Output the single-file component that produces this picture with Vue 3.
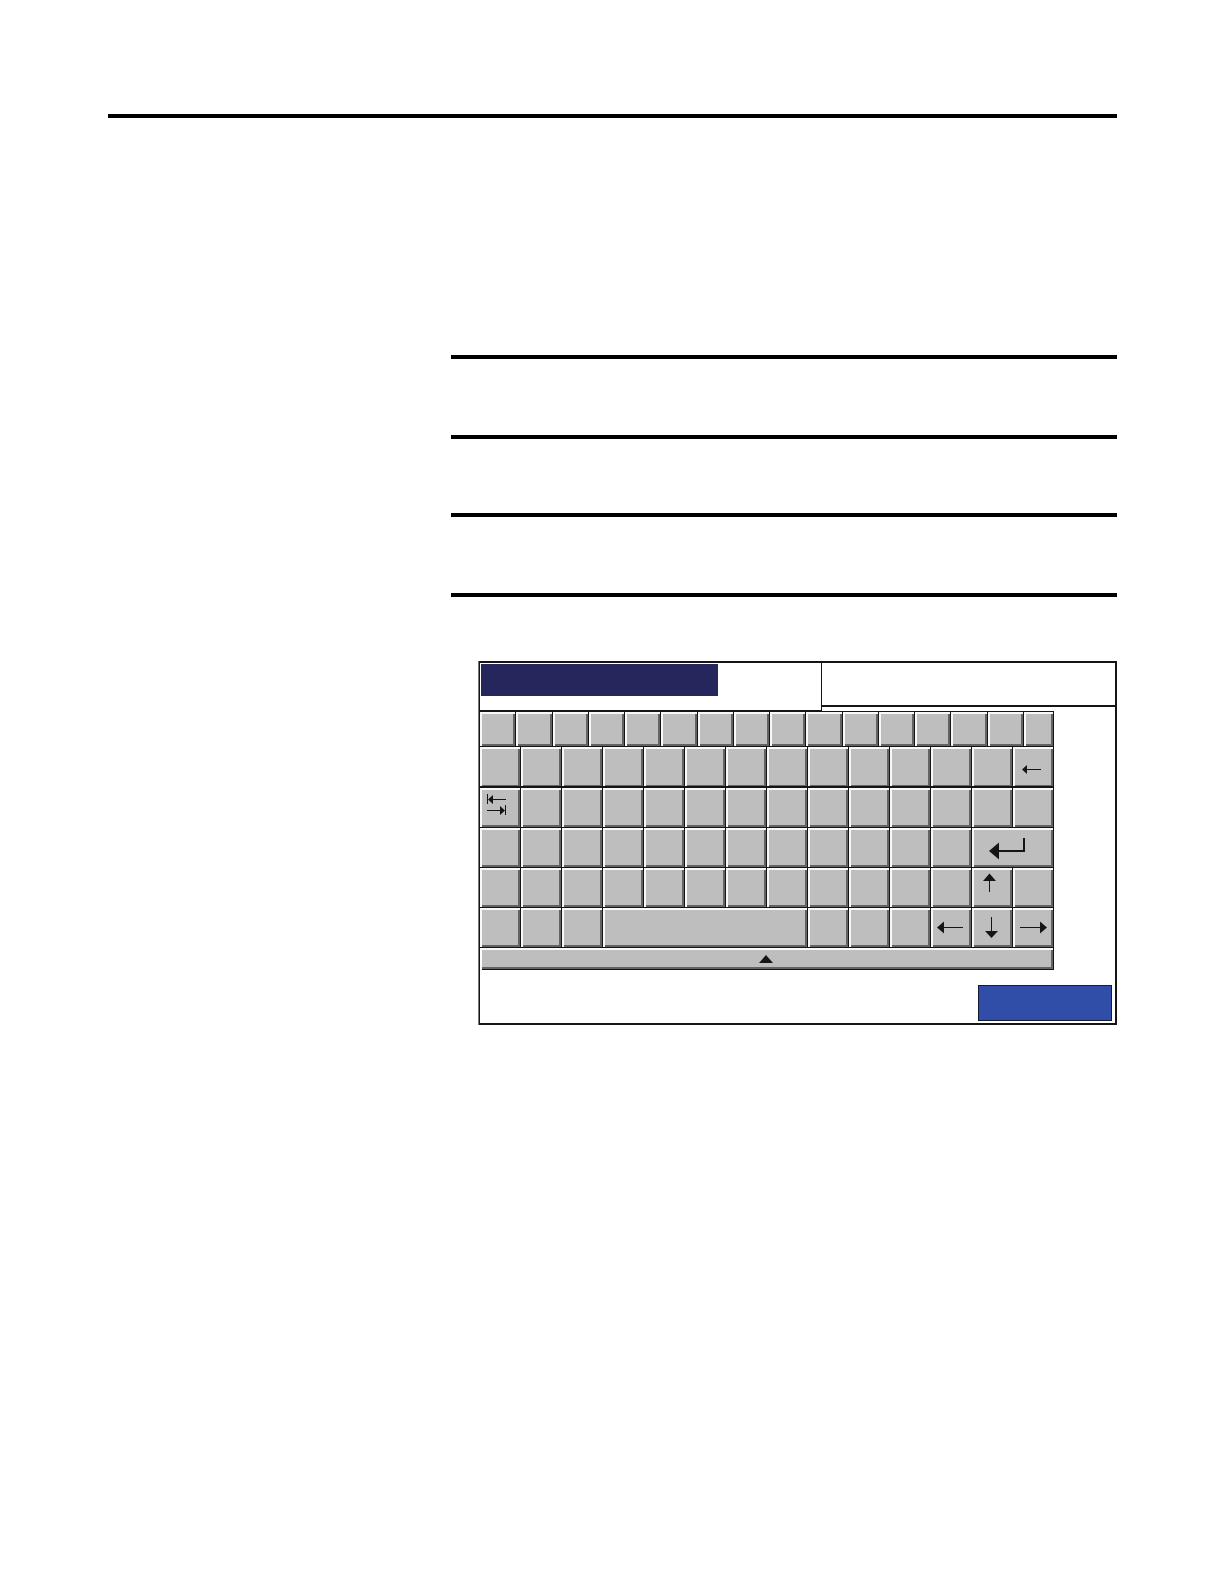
<template>
    <main class="page">
        <hr class="page__rule" />
        <section class="page__notes">
            <div class="note" v-for="(size, index) in notes" :key="index" :class="`note--${size}`"></div>
        </section>
        <section class="panel">
            <header class="panel__header">
                <div class="panel__entry">
                    <div class="panel__selection"></div>
                </div>
                <div class="panel__status"></div>
            </header>
            <div class="keyboard">
                <div
                    class="keyboard__row"
                    v-for="(row, rowIndex) in rows"
                    :key="rowIndex"
                    :class="`keyboard__row--${row.type}`"
                >
                    <button
                        class="key"
                        type="button"
                        v-for="(key, index) in row.keys"
                        :key="index"
                        :class="key.size ? `key--${key.size}` : ''"
                        :aria-label="key.label"
                    >
                        <svg v-if="key.icon" class="key__icon" width="80" height="38" viewBox="0 0 80 38">
                            <path class="key__line" :class="{ 'key__line--bold': key.bold }" :d="key.icon.line" />
                            <path class="key__head" :d="key.icon.head" />
                        </svg>
                    </button>
                </div>
                <button class="key keyboard__bar" type="button" aria-label="Expand">
                    <svg width="18" height="8" viewBox="0 0 18 8">
                        <path class="key__head" d="M0 8L7 0L14 8Z" />
                    </svg>
                </button>
            </div>
            <footer class="panel__footer">
                <button class="panel__action" type="button" aria-label="Action"></button>
            </footer>
        </section>
    </main>
</template>

<script setup>
const notes = ["tall", "short", "tall"];

const icons = {
    backspace: { line: "M13 22.5H28", head: "M9 22.5L14 18V27Z" },
    tab: {
        line: "M7.5 6V16M12 11.5H26M7 22.5H21M25.5 17V27",
        head: "M8 11.5L13 7V16ZM25 22.5L20 18V27Z"
    },
    enter: { line: "M26 23H52V10", head: "M17 23L27 14.5V31.5Z" },
    up: { line: "M17.5 12V24", head: "M17.5 5.5L24 13H11Z" },
    left: { line: "M12 19.5H32", head: "M6 19.5L13 13.5V25.5Z" },
    down: { line: "M19.5 9V24", head: "M19.5 30L13 23H26Z" },
    right: { line: "M7 19.5H28", head: "M34 19.5L27 13.5V25.5Z" }
};

const blank = (count) => Array.from({ length: count }, () => ({}));

const rows = [
    { type: "function", keys: blank(16) },
    { type: "number", keys: [...blank(13), { icon: icons.backspace, label: "Backspace" }] },
    { type: "letter", keys: [{ icon: icons.tab, label: "Tab" }, ...blank(13)] },
    { type: "letter", keys: [...blank(12), { icon: icons.enter, label: "Enter", size: "enter", bold: true }] },
    { type: "letter", keys: [...blank(12), { icon: icons.up, label: "Up" }, {}] },
    {
        type: "letter",
        keys: [
            ...blank(3),
            { size: "space", label: "Space" },
            ...blank(3),
            { icon: icons.left, label: "Left" },
            { icon: icons.down, label: "Down" },
            { icon: icons.right, label: "Right" }
        ]
    }
];
</script>

<style>
body {
    margin: 0;
    background: #fff;
}
</style>

<style scoped>
.page {
    box-sizing: border-box;
    padding: 114px 107px 64px 108px;
    font-family: "Liberation Sans", Arial, sans-serif;
}

.page__rule {
    height: 4px;
    margin: 0;
    border: 0;
    background: #000;
}

.page__notes {
    margin: 237px 0 64px 343px;
    border-bottom: 4px solid #000;
}

.note {
    border-top: 4px solid #000;
}

.note--tall {
    height: 76px;
}

.note--short {
    height: 74px;
}

.panel {
    margin-left: 371px;
    border: 2px solid #151515;
    border-left-width: 1px;
    box-shadow: -1px 0 #777;
}

.panel__header {
    display: grid;
    grid-template-columns: 342fr 293fr;
    align-items: start;
}

.panel__entry {
    box-sizing: border-box;
    height: 49px;
    padding: 1px;
    border-right: 1px solid #151515;
    border-bottom: 2px solid #151515;
}

.panel__selection {
    width: 70%;
    height: 32px;
    background: #25265c;
}

.panel__status {
    height: 42px;
    border-bottom: 2px solid #151515;
}

.keyboard {
    max-width: 574px;
    margin-top: -1px;
    border-top: 1px solid #151515;
}

.keyboard__row {
    display: grid;
    grid-template-columns: repeat(14, 1fr);
    height: 40px;
}

.keyboard__row--function {
    grid-template-columns: repeat(15, 6fr) 5fr;
    height: 35px;
}

.keyboard__row--number {
    height: 41px;
}

.key {
    display: flex;
    align-items: flex-start;
    min-width: 0;
    margin: 0;
    padding: 0;
    overflow: hidden;
    border: 0 solid #151515;
    border-right-width: 1px;
    border-bottom-width: 1px;
    border-radius: 0;
    background: #bebebe;
    box-shadow: inset 2px 2px #f8f8f8, inset -2px -2px #636363;
}

.keyboard__row--number .key {
    border-bottom-width: 2px;
    box-shadow: inset 2px 2px #f8f8f8, inset -2px -1px #636363;
}

.key--enter {
    grid-column: span 2;
}

.key--space {
    grid-column: span 5;
}

.key__icon {
    flex: none;
}

.key__line {
    fill: none;
    stroke: #151515;
    stroke-width: 1;
}

.key__line--bold {
    stroke-width: 2;
}

.key__head {
    fill: #151515;
}

.keyboard__bar {
    align-items: center;
    justify-content: center;
    width: calc(100% - 2px);
    height: 22px;
    margin-left: 2px;
    box-shadow: inset 0 2px #f8f8f8, inset -2px -2px #636363;
}

.panel__footer {
    display: flex;
    justify-content: flex-end;
    padding: 15px 3px 2px;
}

.panel__action {
    width: 134px;
    height: 36px;
    padding: 0;
    border: 1px solid #151b30;
    border-radius: 0;
    background: #304ea8;
}
</style>
